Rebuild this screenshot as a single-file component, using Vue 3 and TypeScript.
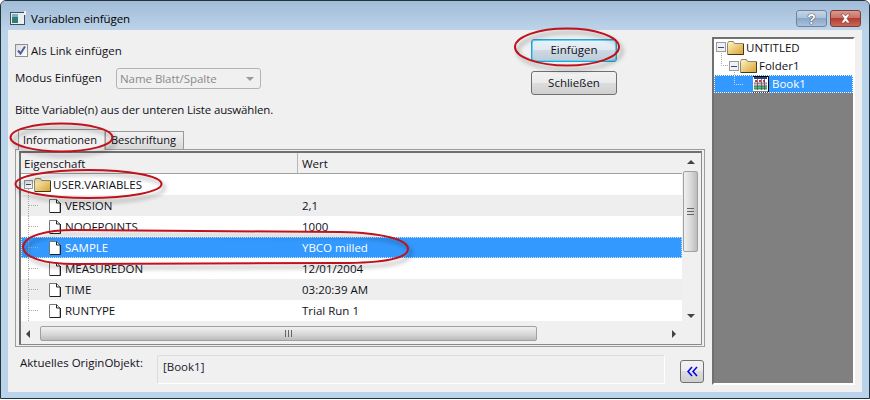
<template>
  <div class="window">
    <div class="titlebar">
      <svg class="title-icon" width="16" height="15" viewBox="0 0 16 15">
        <rect x="0.5" y="1.5" width="14" height="12" fill="#e8eef0" stroke="#40505a" />
        <rect x="2" y="3" width="6" height="9" fill="#2f7f70" />
        <rect x="2" y="3" width="6" height="3" fill="#7fb0c0" />
        <rect x="12" y="9" width="2" height="3" fill="#f4f4f4" />
        <rect x="14" y="0" width="2" height="4" fill="#f0f0f0" />
      </svg>
      <span class="title-text">Variablen einfügen</span>
      <div class="caption-btns">
        <div class="cap-btn cap-help">?</div>
        <div class="cap-btn cap-close">
          <svg width="15" height="11" viewBox="0 0 15 11">
            <path d="M3 1h3l1.500 2L9 1h3L9 5.500 12 10H9L7.500 8 6 10H3l3-4.500z" fill="#fff" stroke="#7a3a30" stroke-width="0.6" />
          </svg>
        </div>
      </div>
    </div>

    <div class="client">
      <div class="left-col">
        <div class="top-section">
          <div class="options">
            <label class="check-row">
              <span class="checkbox">
                <svg width="11" height="11" viewBox="0 0 11 11">
                  <path d="M2 5.500l2.500 3L9 1.500" fill="none" stroke="#4a5f9c" stroke-width="2" />
                </svg>
              </span>
              Als Link einfügen
            </label>
            <div class="mode-row">
              <span class="mode-label">Modus Einfügen</span>
              <div class="combo">
                <span>Name Blatt/Spalte</span>
                <span class="combo-arrow"></span>
              </div>
            </div>
            <div class="hint">Bitte Variable(n) aus der unteren Liste auswählen.</div>
          </div>
          <div class="actions">
            <button class="btn btn-default">Einfügen</button>
            <button class="btn btn-close">Schließen</button>
          </div>
        </div>

        <div class="tabs">
          <div class="tab is-active">Informationen</div>
          <div class="tab">Beschriftung</div>
        </div>

        <div class="panel">
          <div class="frame">
            <div class="list-main">
              <div class="list-head">
                <div class="col-name">Eigenschaft</div>
                <div class="col-value">Wert</div>
              </div>
              <div class="row root-row">
                <svg class="root-branch" width="32" height="21" viewBox="0 0 32 21">
                  <path d="M7.500 15v6" stroke="#a8a8a8" stroke-dasharray="1 1" fill="none" />
                  <rect x="3.500" y="6.500" width="8" height="8" fill="#eef0f4" stroke="#9a9aa0" />
                  <path d="M5 10.500h5" stroke="#404a70" />
                </svg>
                <svg class="folder" width="17" height="14" viewBox="0 0 17 14">
                  <use href="#folder-shape" />
                </svg>
                <span class="root-label">USER.VARIABLES</span>
              </div>
              <div
                v-for="(item, i) in variables"
                :key="item.name"
                class="row"
                :class="{ 'is-alt': i % 2 === 0, 'is-selected': item.name === 'SAMPLE' }"
              >
                <div class="col-name item-cell">
                  <svg class="branch" width="28" height="21" viewBox="0 0 28 21">
                    <path d="M7.500 0v21M8 10.500h9" stroke="#a8a8a8" stroke-dasharray="1 1" fill="none" />
                  </svg>
                  <svg class="doc" width="12" height="14" viewBox="0 0 12 14">
                    <path d="M0.500 0.500h7l3.500 3.500v9.500H0.500z" fill="#fff" stroke="#777" />
                    <path d="M7.500 0.500v3.500H11M11.500 4v9.500H1" fill="none" stroke="#222" />
                  </svg>
                  <span class="item-label">{{ item.name }}</span>
                </div>
                <div class="col-value">{{ item.value }}</div>
              </div>
              <div class="list-gap"></div>
              <div class="hscroll">
                <span class="arrow arrow-left"></span>
                <div class="hthumb"><span class="hgrip"></span></div>
                <span class="arrow arrow-right"></span>
              </div>
            </div>
            <div class="vscroll">
              <span class="arrow arrow-up"></span>
              <div class="vthumb"><span class="vgrip"></span></div>
              <span class="arrow arrow-down"></span>
            </div>
          </div>
        </div>

        <div class="footer">
          <div class="current-label">Aktuelles OriginObjekt:</div>
          <div class="current-box">[Book1]</div>
          <button class="collapse-btn">
            <svg width="11" height="11" viewBox="0 0 11 11">
              <path d="M5 1L1 5.500l4 4.500M10 1L6 5.500l4 4.500" fill="none" stroke="#0000ee" stroke-width="1.500" />
            </svg>
          </button>
        </div>
      </div>

      <div class="tree">
        <div class="tree-row">
          <svg class="tree-branch" width="28" height="18" viewBox="0 0 28 18">
            <path d="M8.500 12v6" stroke="#a8a8a8" stroke-dasharray="1 1" fill="none" />
            <rect x="3.500" y="3.500" width="9" height="9" fill="#eef0f4" stroke="#9a9aa0" />
            <path d="M5 8.500h6" stroke="#404a70" />
          </svg>
          <svg class="folder" width="17" height="14" viewBox="0 0 17 14"><use href="#folder-shape" /></svg>
          <span class="tree-label">UNTITLED</span>
        </div>
        <div class="tree-row">
          <svg class="tree-branch" width="41" height="18" viewBox="0 0 41 18">
            <path d="M8.500 0v8.500H16M21.500 13v5" stroke="#a8a8a8" stroke-dasharray="1 1" fill="none" />
            <rect x="16.500" y="4.500" width="9" height="9" fill="#eef0f4" stroke="#9a9aa0" />
            <path d="M18 9.500h6" stroke="#404a70" />
          </svg>
          <svg class="folder" width="17" height="14" viewBox="0 0 17 14"><use href="#folder-shape" /></svg>
          <span class="tree-label">Folder1</span>
        </div>
        <div class="tree-row is-selected">
          <svg class="tree-branch" width="41" height="16" viewBox="0 0 41 16">
            <path d="M21.500 0v8.500H30" stroke="#cfd8e8" stroke-dasharray="1 1" fill="none" />
          </svg>
          <svg class="book" width="16" height="17" viewBox="0 0 16 17">
            <rect x="0" y="0" width="15" height="16" fill="#fff" />
            <rect x="1" y="1" width="13" height="2" fill="#30407a" />
            <path d="M2 4h2v2H2zM6 4h2v2H6zM10 4h2v2h-2z" fill="#d83040" />
            <path d="M1 7h13v3H1z" fill="#e8b8c0" />
            <path d="M1 10h13v3H1z" fill="#40c860" />
            <path d="M1 7h13M1 10h13M1 13h13M4.500 3v11M8.500 3v11M11.500 3v11" stroke="#404860" stroke-width="0.700" />
            <path d="M0 0.500h15.500V17M0 16h16" fill="none" stroke="#000" />
          </svg>
          <span class="tree-label book-label">Book1</span>
        </div>
      </div>
    </div>

    <svg class="annotations" width="870" height="400" viewBox="0 0 870 400">
      <defs>
        <linearGradient id="folder-fill" x1="0" y1="0" x2="1" y2="1">
          <stop offset="0" stop-color="#fff6c8" />
          <stop offset="1" stop-color="#d8a030" />
        </linearGradient>
        <g id="folder-shape">
          <path d="M0.500 2.500l1-2h5l1 2h9v11H0.500z" fill="url(#folder-fill)" stroke="#8a8a70" />
          <path d="M16.500 3v10.500H1" fill="none" stroke="#40381c" />
        </g>
      </defs>
      <g class="marks">
        <ellipse cx="567" cy="47" rx="52" ry="18.500" />
        <ellipse cx="61.500" cy="137.500" rx="51" ry="14" />
        <ellipse cx="88.500" cy="184" rx="73" ry="14" />
        <path d="M23 247C24 236 45 230 75 230L340 232C385 233 408 240 408 249C408 258 385 263 340 263L75 264C45 264 24 258 23 247Z" />
      </g>
    </svg>
  </div>
</template>

<script setup lang="ts">
interface VariableItem {
  name: string;
  value: string;
}

const variables: VariableItem[] = [
  { name: 'VERSION', value: '2,1' },
  { name: 'NOOFPOINTS', value: '1000' },
  { name: 'SAMPLE', value: 'YBCO milled' },
  { name: 'MEASUREDON', value: '12/01/2004' },
  { name: 'TIME', value: '03:20:39 AM' },
  { name: 'RUNTYPE', value: 'Trial Run 1' },
];
</script>

<style>
html,
body {
  margin: 0;
  background: #fff;
}
</style>

<style scoped>
.window {
  position: relative;
  width: 870px;
  height: 399px;
  box-sizing: border-box;
  border: 1px solid #24343c;
  border-radius: 6px 6px 0 0;
  background: #b9d3ea;
  font-family: "Open Sans", "Noto Sans", sans-serif;
  font-size: 11.5px;
  color: #101018;
  overflow: hidden;
}

.titlebar {
  display: flex;
  align-items: center;
  height: 29px;
  padding: 6px 8px 0 9px;
  box-sizing: border-box;
  background: linear-gradient(#a2bcd8, #bcd3e9);
}

.title-icon {
  flex-shrink: 0;
  margin-right: 5px;
}

.title-text {
  letter-spacing: -0.1px;
  color: #000;
}

.caption-btns {
  display: flex;
  gap: 3px;
  margin-left: auto;
}

.cap-btn {
  display: flex;
  align-items: center;
  justify-content: center;
  height: 17px;
  box-sizing: border-box;
  border-radius: 3px;
  font-family: "Liberation Sans", sans-serif;
  font-weight: 700;
}

.cap-help {
  width: 31px;
  border: 1px solid #6f8499;
  background: linear-gradient(#c4d5e6 0, #a9c0d8 50%, #8ba8c8 50%, #a8c2dc 100%);
  color: #fff;
  font-size: 14px;
  text-shadow: 0 0 1px #223, 0 0 1px #223;
}

.cap-close {
  width: 31px;
  border: 1px solid #7e3d36;
  background: linear-gradient(#d99a90 0, #c86d62 50%, #b23d30 50%, #c9685a 100%);
}

.client {
  display: flex;
  gap: 7px;
  margin: 0 7px;
  height: 362px;
  padding: 7px;
  box-sizing: border-box;
  background: #f0f0f0;
}

.left-col {
  display: flex;
  flex-direction: column;
  width: 690px;
  flex-shrink: 0;
}

.top-section {
  display: flex;
  justify-content: space-between;
  height: 91px;
  padding-right: 88px;
}

.options {
  display: flex;
  flex-direction: column;
  padding-top: 6px;
}

.check-row {
  display: flex;
  align-items: center;
  gap: 3px;
  height: 15px;
}

.checkbox {
  display: flex;
  align-items: center;
  justify-content: center;
  width: 13px;
  height: 13px;
  box-sizing: border-box;
  border: 1px solid #8e8f8f;
  background: linear-gradient(135deg, #dcdcdc, #fff);
}

.mode-row {
  display: flex;
  align-items: center;
  margin-top: 10px;
  height: 21px;
}

.mode-label {
  width: 101px;
  line-height: 19px;
  padding-bottom: 2px;
}

.combo {
  display: flex;
  align-items: center;
  justify-content: space-between;
  width: 145px;
  height: 21px;
  box-sizing: border-box;
  padding: 0 6px 0 3px;
  border: 1px solid #b4b4b4;
  border-radius: 3px;
  background: #f0f0f0;
  color: #8a8a8a;
  letter-spacing: -0.05px;
}

.combo-arrow {
  width: 0;
  height: 0;
  border-left: 4px solid transparent;
  border-right: 4px solid transparent;
  border-top: 4px solid #9a9a9a;
}

.hint {
  margin-top: 13px;
  line-height: 16px;
  letter-spacing: -0.16px;
}

.actions {
  display: flex;
  flex-direction: column;
  gap: 9px;
  padding-top: 2px;
}

.btn {
  width: 86px;
  height: 23px;
  padding: 0 0 2px;
  border: 1px solid #707070;
  border-radius: 3px;
  background: linear-gradient(#f2f2f2 0, #ebebeb 50%, #dddddd 50%, #cfcfcf 100%);
  font: inherit;
  color: #101018;
}

.btn-default {
  border-color: #2f9fd0;
  box-shadow: inset 0 0 0 1px #5fd4f4;
  background: linear-gradient(#eaf2f8 0, #dfe8f0 50%, #cdd9e4 50%, #bcccd9 100%);
}

.btn-close {
  height: 24px;
}

.tabs {
  display: flex;
  align-items: flex-end;
  height: 21px;
  padding-left: 3px;
  font-size: 11px;
  position: relative;
}

.tab {
  box-sizing: border-box;
  height: 18px;
  line-height: 16px;
  width: 79px;
  padding-left: 5px;
  border: 1px solid #9a9a9a;
  border-bottom: none;
  background: linear-gradient(#f2f2f2, #d8d8d8);
}

.tab.is-active {
  height: 21px;
  line-height: 19px;
  width: 87px;
  padding-left: 4px;
  background: #f0f0f0;
  border-right-color: #c0c0c0;
  margin-bottom: -1px;
}

.panel {
  box-sizing: border-box;
  height: 198px;
  padding: 1px 2px 1px 3px;
  border: 1px solid #9c9c9c;
}

.frame {
  display: flex;
  height: 100%;
  box-sizing: border-box;
  padding-right: 2px;
  border-style: solid;
  border-color: #707070 #8a8a8a #8a8a8a #707070;
  border-width: 2px 1px 1px 2px;
}

.list-main {
  display: flex;
  flex-direction: column;
  width: 661px;
  flex-shrink: 0;
}

.list-head {
  display: flex;
  flex-shrink: 0;
  box-sizing: border-box;
  height: 21px;
  line-height: 21px;
  border-bottom: 1px solid #a0a0a0;
  background: #f0f0f0;
}

.col-name {
  width: 277px;
  flex-shrink: 0;
  box-sizing: border-box;
}

.list-head .col-name {
  padding-left: 3px;
  border-right: 1px solid #b8b8b8;
}

.col-value {
  padding-left: 4px;
}

.row {
  display: flex;
  align-items: center;
  flex-shrink: 0;
  height: 21px;
  background: #fff;
}

.row.is-alt {
  background: #eeeeee;
}

.row.is-selected {
  background: #3399ff;
  color: #fff;
  outline: 1px dotted #cfe6ff;
  outline-offset: -1px;
}

.root-row {
  background: #fff;
}

.root-branch {
  flex-shrink: 0;
  margin-right: -19px;
}

.root-label {
  margin-left: 2px;
}

.folder {
  flex-shrink: 0;
}

.item-cell {
  display: flex;
  align-items: center;
}

.branch {
  flex-shrink: 0;
}

.doc {
  flex-shrink: 0;
}

.item-label {
  margin-left: 4px;
}

.list-gap {
  height: 4px;
  flex-shrink: 0;
}

.hscroll {
  display: flex;
  align-items: center;
  height: 17px;
  flex-shrink: 0;
  background: #f0f0f0;
}

.hthumb {
  display: flex;
  align-items: center;
  justify-content: center;
  width: 497px;
  height: 15px;
  margin: 0 auto 0 10px;
  box-sizing: border-box;
  border: 1px solid #a0a0a0;
  border-radius: 2px;
  background: linear-gradient(#f0f0f0, #d8d8d8 55%, #bcbcbc);
}

.hgrip {
  width: 7px;
  height: 7px;
  box-sizing: border-box;
  border-left: 1px solid #666;
  border-right: 1px solid #666;
  background: linear-gradient(90deg, transparent 40%, #666 40%, #666 60%, transparent 60%);
}

.vscroll {
  display: flex;
  flex-direction: column;
  align-items: center;
  width: 17px;
  height: 171px;
  flex-shrink: 0;
  background: #f0f0f0;
}

.vthumb {
  display: flex;
  align-items: center;
  justify-content: center;
  width: 15px;
  height: 81px;
  margin-top: 7px;
  box-sizing: border-box;
  border: 1px solid #a0a0a0;
  border-radius: 2px;
  background: linear-gradient(90deg, #f0f0f0, #d8d8d8 55%, #bcbcbc);
}

.vgrip {
  width: 7px;
  height: 7px;
  box-sizing: border-box;
  border-top: 1px solid #666;
  border-bottom: 1px solid #666;
  background: linear-gradient(transparent 40%, #666 40%, #666 60%, transparent 60%);
}

.arrow {
  width: 0;
  height: 0;
  flex-shrink: 0;
}

.arrow-up {
  margin-top: 7px;
  border-left: 4px solid transparent;
  border-right: 4px solid transparent;
  border-bottom: 4px solid #444;
}

.arrow-down {
  margin-top: auto;
  margin-bottom: 6px;
  border-left: 4px solid transparent;
  border-right: 4px solid transparent;
  border-top: 4px solid #444;
}

.arrow-left {
  margin-left: 5px;
  border-top: 4px solid transparent;
  border-bottom: 4px solid transparent;
  border-right: 4px solid #444;
}

.arrow-right {
  margin-right: 6px;
  border-top: 4px solid transparent;
  border-bottom: 4px solid transparent;
  border-left: 4px solid #444;
}

.footer {
  display: flex;
  align-items: flex-start;
  padding-left: 5px;
  flex: 1;
}

.current-label {
  width: 137px;
  flex-shrink: 0;
  margin-top: 8px;
  line-height: 16px;
}

.current-box {
  width: 508px;
  height: 29px;
  margin-top: 8px;
  box-sizing: border-box;
  padding: 3px 5px;
  line-height: 16px;
  border: 1px solid #dcdcdc;
  border-right-color: #fff;
  border-bottom-color: #fff;
  border-radius: 2px;
  color: #20202c;
}

.collapse-btn {
  display: flex;
  align-items: center;
  justify-content: center;
  width: 24px;
  height: 23px;
  margin-top: 13px;
  margin-left: 15px;
  padding: 0;
  border: 1px solid #707070;
  border-radius: 3px;
  background: linear-gradient(#f2f2f2 0, #ebebeb 50%, #dddddd 50%, #cfcfcf 100%);
}

.tree {
  flex: 1;
  box-sizing: border-box;
  border-style: solid;
  border-color: #707070 #fff #fff #707070;
  border-width: 2px;
  background: #808080;
}

.tree-row {
  display: flex;
  align-items: center;
  height: 18px;
  background: #fff;
}

.tree-row.is-selected {
  box-sizing: border-box;
  background: #3399ff;
  color: #fff;
  outline: 1px dotted #fff;
  outline-offset: -1px;
}

.tree-branch {
  flex-shrink: 0;
  margin-left: -1px;
}

.tree-row .folder {
  margin-left: -14px;
}

.book {
  margin-left: -1px;
  flex-shrink: 0;
}

.tree-label {
  margin-left: 2px;
  padding-bottom: 2px;
}

.book-label {
  margin-left: 3px;
}

.annotations {
  position: absolute;
  left: -1px;
  top: -1px;
  pointer-events: none;
}

.marks {
  fill: none;
  stroke: #c0121c;
  stroke-width: 2;
  filter: drop-shadow(3px 4px 2px rgba(0, 0, 0, 0.35));
}
</style>
